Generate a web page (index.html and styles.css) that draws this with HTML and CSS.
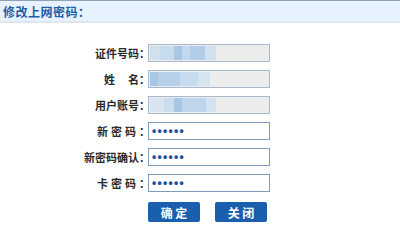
FILE: index.html
```html
<!DOCTYPE html>
<html lang="zh-CN">
<head>
    <meta charset="UTF-8">
    <title>修改上网密码</title>
    <link rel="stylesheet" href="styles.css">
</head>
<body>
    <div class="titlebar">修改上网密码：</div>
    <main>
        <div class="form">
            <label>证件号码：</label>
            <div class="field readonly"><span class="blur b1"></span></div>

            <label><span class="wide">姓</span>名：</label>
            <div class="field readonly"><span class="blur b2"></span></div>

            <label>用户账号：</label>
            <div class="field readonly"><span class="blur b3"></span></div>

            <label><span class="spaced">新密码</span>：</label>
            <input class="field" type="password" value="123456">

            <label>新密码确认：</label>
            <input class="field" type="password" value="123456">

            <label><span class="spaced">卡密码</span>：</label>
            <input class="field" type="password" value="123456">
        </div>
        <div class="buttons">
            <button>确 定</button>
            <button>关 闭</button>
        </div>
    </main>
</body>
</html>
```

FILE: styles.css
```css
*{
    margin: 0;
    padding: 0;
    box-sizing: border-box;
    font-family: "Noto Sans CJK SC", "Liberation Sans", sans-serif;
}
body{
    background: white;
}
.titlebar{
    height: 23px;
    border-top: 1px solid #8fa1b6;
    border-bottom: 2px solid #dfe6ee;
    background: #e6f2fd;
    color: #1f5ea8;
    font-size: 12px;
    font-weight: bold;
    line-height: 21px;
    padding-left: 3px;
    letter-spacing: 0.5px;
}
main{
    padding-top: 21px;
}
.form{
    display: grid;
    grid-template-columns: 148px 122px;
    grid-auto-rows: 18px;
    row-gap: 8px;
}
.form label{
    margin-right: -2px;
    text-align: right;
    font-size: 11px;
    font-weight: bold;
    color: #2a2a2a;
    line-height: 18px;
}
.wide{
    margin-right: 13px;
}
.spaced{
    letter-spacing: 3px;
}
.field{
    position: relative;
    height: 18px;
    border: 1px solid #7f9dbb;
    background: white;
    outline: none;
}
.field.readonly{
    border-color: #a9b9cb;
    background: #ececec;
}
input.field{
    padding-left: 3px;
    font-family: "Liberation Sans", sans-serif;
    font-size: 12px;
    font-weight: bold;
    letter-spacing: 1.3px;
    color: #1c4d9e;
}
.blur{
    position: absolute;
    top: 1px;
    left: 1px;
    height: 14px;
}
.b1{
    width: 66px;
    background: linear-gradient(90deg, #d2e0ee 0 10px, #c7dbee 10px 24px, #a9c6e3 24px 32px, #c2d8ee 32px 40px, #b2cde7 40px 55px, #d1e1f0 55px 66px);
}
.b2{
    width: 60px;
    background: linear-gradient(90deg, #a9c6e3 0 8px, #b7d0ea 8px 30px, #c7dbee 30px 48px, #d6e4f2 48px 60px);
}
.b3{
    width: 66px;
    background: linear-gradient(90deg, #d8e5f1 0 14px, #cadcee 14px 24px, #a9c6e3 24px 32px, #bfd5ec 32px 56px, #d3e2f1 56px 66px);
}
.buttons{
    display: flex;
    gap: 15px;
    padding: 10px 0 0 148px;
}
.buttons button{
    width: 52px;
    height: 20px;
    border: none;
    border-radius: 2px;
    background: #1a5fae;
    color: white;
    font-size: 12px;
    font-weight: bold;
    cursor: pointer;
}
```
